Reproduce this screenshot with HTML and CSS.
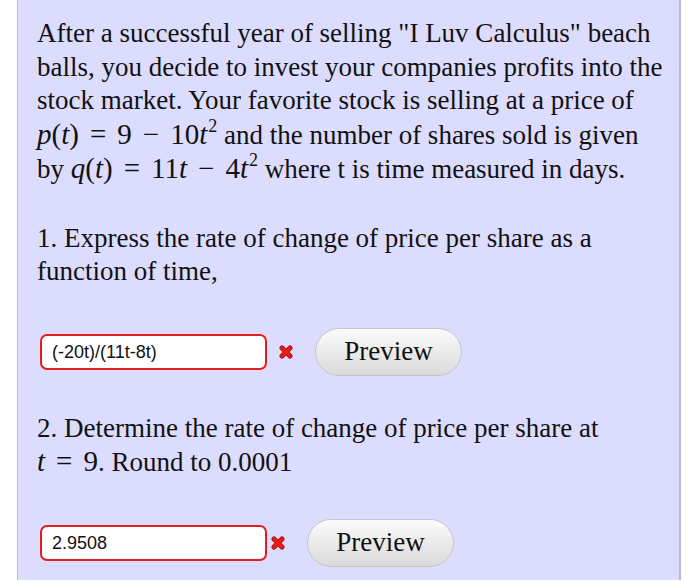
FILE: index.html
```html
<!DOCTYPE html>
<html>
<head>
<meta charset="utf-8">
<link rel="stylesheet" href="styles.css">
</head>
<body>
<div class="panel">
  <p class="para">After a successful year of selling "I Luv Calculus" beach<br>balls, you decide to invest your companies profits into the<br>stock market. Your favorite stock is selling at a price of<br><span class="m"><i>p</i>(<i>t</i>)<span class="op">=</span>9<span class="op">−</span>10<i>t</i><sup>2</sup></span> and the number of shares sold is given<br>by <span class="m"><i>q</i>(<i>t</i>)<span class="op">=</span>11<i>t</i><span class="op">−</span>4<i>t</i><sup>2</sup></span> where t is time measured in days.</p>

  <p class="para q1">1. Express the rate of change of price per share as a<br>function of time,</p>

  <div class="answer a1">
    <div class="field">(-20t)/(11t-8t)</div>
    <svg class="mark" width="14" height="14" viewBox="0 0 14 14"><path d="M3 3 L11 11 M11 3 L3 11" stroke="#9a1010" stroke-width="5" stroke-linecap="round"/><path d="M3 3 L11 11 M11 3 L3 11" stroke="#f01818" stroke-width="3.4" stroke-linecap="round"/></svg>
    <button class="preview">Preview</button>
  </div>

  <p class="para q2">2. Determine the rate of change of price per share at<br><span class="m"><i>t</i><span class="op">=</span>9</span>. Round to 0.0001</p>

  <div class="answer a2">
    <div class="field">2.9508</div>
    <svg class="mark" width="14" height="14" viewBox="0 0 14 14"><path d="M3 3 L11 11 M11 3 L3 11" stroke="#9a1010" stroke-width="5" stroke-linecap="round"/><path d="M3 3 L11 11 M11 3 L3 11" stroke="#f01818" stroke-width="3.4" stroke-linecap="round"/></svg>
    <button class="preview">Preview</button>
  </div>
</div>
</body>
</html>
```
FILE: styles.css
```css
html, body {
  margin: 0;
  padding: 0;
  background: #ffffff;
}
.panel {
  margin-left: 17px;
  width: 664px;
  height: 580px;
  background: #dcdcfe;
  border-left: 1px solid #b8b8d8;
  border-right: 2px solid #b8b8d8;
  box-sizing: border-box;
  padding: 17px 0 0 19px;
  font-family: "Liberation Serif", "Times New Roman", serif;
  color: #111;
}
.para {
  margin: 0;
  font-size: 27px;
  line-height: 33.5px;
  white-space: nowrap;
}
.m {
  font-size: 29px;
}
.m i {
  font-style: italic;
}
.m sup {
  font-size: 18px;
  line-height: 0;
  vertical-align: 12px;
  margin-left: 1px;
}
.op {
  margin: 0 11px;
}
.q1 {
  margin-top: 35px;
}
.answer {
  display: flex;
  align-items: center;
}
.a1 {
  margin-top: 39px;
}
.field {
  width: 227px;
  height: 36px;
  box-sizing: border-box;
  border: 2px solid #e02020;
  border-radius: 7px;
  background: #fff;
  font-family: "Liberation Sans", Arial, sans-serif;
  font-size: 18px;
  line-height: 32px;
  padding-left: 10px;
  color: #111;
  margin-left: 3px;
}
.mark {
  margin-left: 12px;
}
.a1 .preview {
  margin-left: 22px;
}
.preview {
  width: 147px;
  height: 48px;
  border-radius: 24px;
  border: 1px solid #c6c6c6;
  background: linear-gradient(#fbfbfb, #dadada);
  font-family: "Liberation Serif", "Times New Roman", serif;
  font-size: 27px;
  color: #111;
  padding: 0;
}
.q2 {
  margin-top: 36px;
}
.a2 {
  margin-top: 39px;
}
.a2 .mark {
  margin-left: 4px;
}
.a2 .preview {
  margin-left: 22px;
}
```
